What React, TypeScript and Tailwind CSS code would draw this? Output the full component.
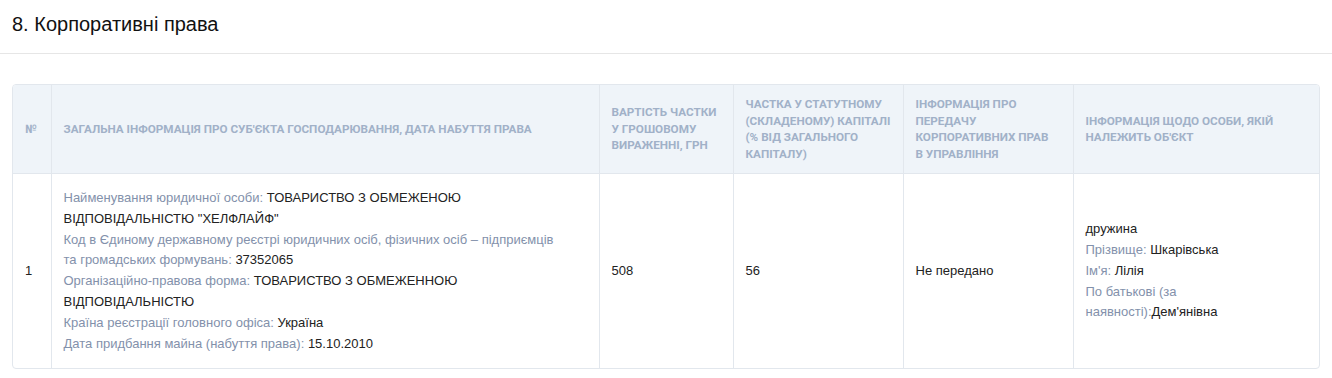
const head = [
  "№",
  "Загальна інформація про суб'єкта господарювання, дата набуття права",
  "Вартість частки у грошовому вираженні, грн",
  "Частка у статутному (складеному) капіталі (% від загального капіталу)",
  "Інформація про передачу корпоративних прав в управління",
  "Інформація щодо особи, якій належить об'єкт",
];

const headPad = ["pr-3", "pr-3", "pr-[14px]", "pr-3", "pr-5", "pr-3"];

const Field = ({ label, value }: { label: string; value: string }) => (
  <div>
    <span className="text-[#8391ab]">{label}:</span> <span className="text-[#222]">{value}</span>
  </div>
);

export default function App() {
  return (
    <div className="bg-white font-['Liberation_Sans',Arial,sans-serif] min-h-[378px]">
      <div className="h-[54px] border-b border-[#e6e6e6] px-3 pt-[10px]">
        <h2 className="text-[20px] leading-7 text-[#111]">8. Корпоративні права</h2>
      </div>

      <div className="mx-3 mt-[30px] border border-[#e2e7ed] rounded-[4px] overflow-hidden">
        <table className="w-full table-fixed border-collapse text-[13px] leading-[1.6]">
          <colgroup>
            <col className="w-[38px]" />
            <col className="w-[548px]" />
            <col className="w-[134px]" />
            <col className="w-[170px]" />
            <col className="w-[170px]" />
            <col />
          </colgroup>
          <thead>
            <tr className="bg-[#eff4f9] border-b border-[#e2e7ed]">
              {head.map((h, i) => (
                <th
                  key={i}
                  className={`pl-3 ${headPad[i]} py-[11px] text-left align-middle font-['Roboto',sans-serif] font-bold uppercase text-[11.7px] leading-[16.5px] text-[#a1b1c8] ${i > 0 ? "border-l border-[#e2e7ed]" : ""}`}
                >
                  {h}
                </th>
              ))}
            </tr>
          </thead>
          <tbody>
            <tr className="align-middle text-[#222]">
              <td className="px-3 py-[14px]">1</td>
              <td className="pl-3 pr-8 py-[14px] border-l border-[#e2e7ed]">
                <Field label="Найменування юридичної особи" value={'ТОВАРИСТВО З ОБМЕЖЕНОЮ ВІДПОВІДАЛЬНІСТЮ "ХЕЛФЛАЙФ"'} />
                <Field
                  label="Код в Єдиному державному реєстрі юридичних осіб, фізичних осіб – підприємців та громадських формувань"
                  value="37352065"
                />
                <Field label="Організаційно-правова форма" value="ТОВАРИСТВО З ОБМЕЖЕННОЮ ВІДПОВІДАЛЬНІСТЮ" />
                <Field label="Країна реєстрації головного офіса" value="Україна" />
                <Field label="Дата придбання майна (набуття права)" value="15.10.2010" />
              </td>
              <td className="px-3 py-[14px] border-l border-[#e2e7ed]">508</td>
              <td className="px-3 py-[14px] border-l border-[#e2e7ed]">56</td>
              <td className="px-3 py-[14px] border-l border-[#e2e7ed]">Не передано</td>
              <td className="px-3 py-[14px] border-l border-[#e2e7ed]">
                <div>дружина</div>
                <Field label="Прізвище" value="Шкарівська" />
                <Field label="Ім'я" value="Лілія" />
                <div>
                  <span className="text-[#8391ab]">По батькові (за наявності):</span>
                  <span>Дем'янівна</span>
                </div>
              </td>
            </tr>
          </tbody>
        </table>
      </div>
    </div>
  );
}
